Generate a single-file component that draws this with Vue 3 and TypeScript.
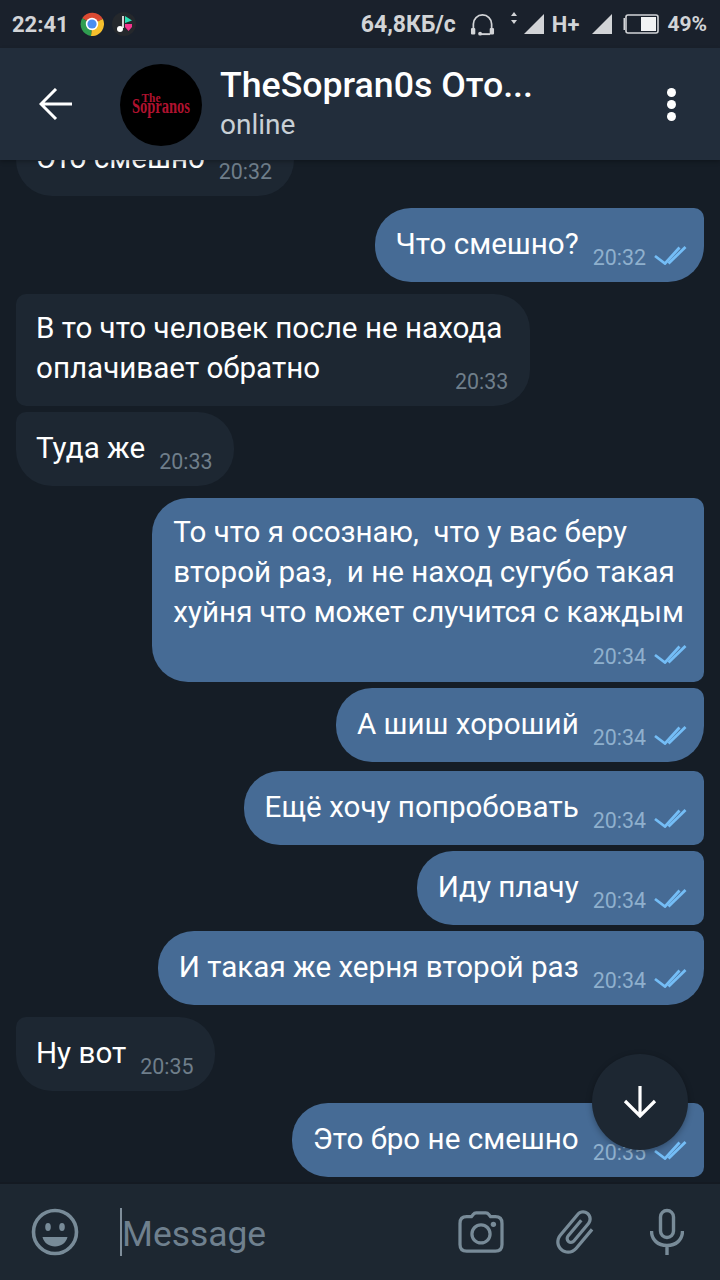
<template>
  <div class="phone">
    <div class="status-bar">
      <span class="clock">22:41</span>
      <svg class="status-app" width="24" height="24" viewBox="0 0 24 24">
        <path d="M12 12 L2.2 6.2 A12 12 0 0 1 22.9 7 Z" fill="#db4a32" />
        <path d="M12 12 L22.9 7 A12 12 0 0 1 11 24 Z" fill="#f6c02d" />
        <path d="M12 12 L11 24 A12 12 0 0 1 2.2 6.2 Z" fill="#2f9d50" />
        <circle cx="12" cy="12" r="6.2" fill="#fff" />
        <circle cx="12" cy="12" r="4.6" fill="#4a8df0" />
      </svg>
      <svg class="status-app" width="24" height="24" viewBox="0 0 24 24">
        <circle cx="12" cy="12" r="12" fill="#25282c" />
        <path d="M11 4 V16" stroke="#fff" stroke-width="1.6" />
        <circle cx="8" cy="17" r="3" fill="#fff" />
        <path d="M13 4 L20 8.5 L13 11 Z" fill="#2be0b4" />
        <path d="M13 12 H20 V15 L16.5 19 L13 15 Z" fill="#f5358f" />
      </svg>
      <span class="status-spacer"></span>
      <span class="speed">64,8КБ/с</span>
      <svg class="status-headset" width="25" height="24" viewBox="0 0 26 24" fill="none">
        <path d="M3.5 17 V11 a9.5 9.5 0 0 1 19 0 V17" stroke="#d2d4d7" stroke-width="1.8" />
        <rect x="1" y="15" width="4.5" height="7" rx="1.2" fill="#d2d4d7" />
        <rect x="20.5" y="15" width="4.5" height="7" rx="1.2" fill="#d2d4d7" />
        <path d="M10 21.5 H21" stroke="#d2d4d7" stroke-width="2" />
        <circle cx="10.5" cy="21" r="2" fill="#d2d4d7" />
      </svg>
      <svg class="status-arrows" width="6" height="12" viewBox="0 0 6 12">
        <path d="M3 0 L6 4 H0 Z M3 12 L6 8 H0 Z" fill="#d2d4d7" />
      </svg>
      <svg class="status-signal" width="20" height="20" viewBox="0 0 20 20">
        <path d="M20 0 V20 H0 Z" fill="#d2d4d7" />
      </svg>
      <span class="network">H+</span>
      <svg class="status-signal second" width="20" height="20" viewBox="0 0 20 20">
        <path d="M20 0 V20 H0 Z" fill="#d2d4d7" />
      </svg>
      <svg class="status-battery" width="37" height="20" viewBox="0 0 37 20" fill="none">
        <path d="M3 4 H1.5 V16 H3 Z" fill="#d2d4d7" />
        <rect x="4" y="1" width="32" height="18" rx="2" stroke="#d2d4d7" stroke-width="1.6" />
        <rect x="19" y="3" width="15" height="14" fill="#f2f3f4" />
      </svg>
      <span class="percent">49%</span>
    </div>

    <header class="chat-header">
      <svg class="back" width="34" height="32" viewBox="0 0 34 32" fill="none">
        <path d="M33 16 H3 M17 1 L2 16 L17 31" stroke="#fff" stroke-width="3" />
      </svg>
      <div class="avatar">
        <svg width="82" height="82" viewBox="0 0 82 82">
          <text x="31" y="38" class="logo-the" textLength="19" lengthAdjust="spacingAndGlyphs">The</text>
          <text x="41" y="49" class="logo-name" textLength="58" lengthAdjust="spacingAndGlyphs">Sopranos</text>
        </svg>
      </div>
      <div class="peer">
        <div class="peer-name">TheSopran0s Ото...</div>
        <div class="peer-status">online</div>
      </div>
      <div class="menu-dots">
        <i></i><i></i><i></i>
      </div>
    </header>

    <main class="chat">
      <div
        v-for="msg in messages"
        :key="msg.id"
        class="bubble"
        :class="[msg.out ? 'out' : 'in', msg.corners, msg.gap, { stack: msg.stack, overlap: msg.overlap }]"
      >
        <div class="text">{{ msg.text }}</div>
        <div class="meta">
          <span class="time">{{ msg.time }}</span>
          <svg v-if="msg.out" class="checks" width="33" height="19" viewBox="0 0 33 19" fill="none">
            <path d="M1 10 L11 17.5 L25.5 1.5" stroke="#74bdf6" stroke-width="2.8" />
            <path d="M14.5 17.5 L31.5 1" stroke="#74bdf6" stroke-width="2.8" />
          </svg>
        </div>
      </div>
      <button class="scroll-down">
        <svg width="34" height="34" viewBox="0 0 34 34" fill="none">
          <path d="M17 1 V30 M2 16 L17 31 L32 16" stroke="#fff" stroke-width="3.2" />
        </svg>
      </button>
    </main>

    <footer class="composer">
      <svg class="emoji" width="48" height="48" viewBox="0 0 48 48" fill="none">
        <circle cx="24" cy="24" r="21.5" stroke="#788b98" stroke-width="3.6" />
        <ellipse cx="17" cy="19" rx="2.8" ry="4" fill="#788b98" />
        <ellipse cx="31" cy="19" rx="2.8" ry="4" fill="#788b98" />
        <path d="M11.5 29 H36.5 C35 35 30 38.5 24 38.5 C18 38.5 13 35 11.5 29 Z" fill="#788b98" />
      </svg>
      <div class="input">
        <span class="caret"></span>
        <span class="placeholder">Message</span>
      </div>
      <svg class="camera" width="46" height="42" viewBox="0 0 48 44" fill="none">
        <path d="M9 6 H14 L16 3.5 Q17 2 19 2 H29 Q31 2 32 3.5 L34 6 H39 Q46 6 46 13 V35 Q46 42 39 42 H9 Q2 42 2 35 V13 Q2 6 9 6 Z" stroke="#788b98" stroke-width="3.4" />
        <circle cx="24" cy="24" r="9.5" stroke="#788b98" stroke-width="3.4" />
        <circle cx="37" cy="14" r="2.8" fill="#788b98" />
      </svg>
      <svg class="clip" width="52" height="52" viewBox="0 0 24 24">
        <path
          transform="rotate(40 12 12)"
          d="M16.5 6v11.5c0 2.21-1.79 4-4 4s-4-1.79-4-4V5c0-1.38 1.12-2.5 2.5-2.5s2.5 1.12 2.5 2.5v10.5c0 .55-.45 1-1 1s-1-.45-1-1V6H10v9.5c0 1.38 1.12 2.5 2.5 2.5s2.5-1.12 2.5-2.5V5c0-2.21-1.79-4-4-4S7 2.79 7 5v12.5c0 3.04 2.46 5.5 5.5 5.5s5.5-2.46 5.5-5.5V6h-1.5z"
          fill="#788b98"
        />
      </svg>
      <svg class="mic" width="34" height="48" viewBox="0 0 34 48" fill="none">
        <rect x="10.5" y="2.5" width="13" height="27" rx="6.5" stroke="#788b98" stroke-width="3.4" />
        <path d="M1.5 23 C1.5 32 8 37.5 17 37.5 C26 37.5 32.5 32 32.5 23 M17 37 V47" stroke="#788b98" stroke-width="3.4" />
      </svg>
    </footer>
  </div>
</template>

<script setup lang="ts">
interface Message {
  id: number;
  text: string;
  time: string;
  out: boolean;
  corners: string;
  gap?: string;
  stack?: boolean;
  overlap?: boolean;
}

const messages: Message[] = [
  { id: 1, text: 'Это смешно', time: '20:32', out: false, corners: 'c-single' },
  { id: 2, text: 'Что смешно?', time: '20:32', out: true, corners: 'c-first' },
  { id: 3, text: 'В то что человек после не находа\nоплачивает обратно', time: '20:33', out: false, corners: 'c-mid-in', stack: true, overlap: true },
  { id: 4, text: 'Туда же', time: '20:33', out: false, corners: 'c-last-in', gap: 'tight' },
  {
    id: 5,
    text: 'То что я осознаю,  что у вас беру\nвторой раз,  и не наход сугубо такая\nхуйня что может случится с каждым',
    time: '20:34',
    out: true,
    corners: 'c-mid-out',
    stack: true,
  },
  { id: 6, text: 'А шиш хороший', time: '20:34', out: true, corners: 'c-last-out', gap: 'tight' },
  { id: 7, text: 'Ещё хочу попробовать', time: '20:34', out: true, corners: 'c-mid-out', gap: 'mid' },
  { id: 8, text: 'Иду плачу', time: '20:34', out: true, corners: 'c-mid-out', gap: 'tight' },
  { id: 9, text: 'И такая же херня второй раз', time: '20:34', out: true, corners: 'c-last-out', gap: 'tight' },
  { id: 10, text: 'Ну вот', time: '20:35', out: false, corners: 'c-last-in' },
  { id: 11, text: 'Это бро не смешно', time: '20:35', out: true, corners: 'c-mid-out' },
];
</script>

<style>
html,
body {
  margin: 0;
  background: #151d26;
}
</style>

<style scoped>
.phone {
  width: 720px;
  height: 1280px;
  display: flex;
  flex-direction: column;
  overflow: hidden;
  background: #151d26;
  font-family: Roboto, "Noto Sans", sans-serif;
  color: #fff;
}

.status-bar {
  height: 48px;
  flex: none;
  display: flex;
  align-items: center;
  padding: 0 13px 0 12px;
  box-sizing: border-box;
  background: #1a212c;
  color: #d2d4d7;
  font-size: 21px;
  font-weight: 700;
}

.clock {
  margin-right: 11px;
  font-size: 22px;
}

.status-app {
  margin-right: 8px;
}

.status-spacer {
  flex: 1;
}

.speed {
  font-size: 23px;
}

.status-headset {
  margin-left: 14px;
  margin-top: 2px;
}

.status-arrows {
  margin-left: 16px;
  margin-top: -12px;
}

.status-signal {
  margin-left: 7px;
}

.status-signal.second {
  margin-left: 13px;
}

.network {
  margin-left: 8px;
  font-size: 22px;
}

.status-battery {
  margin-left: 10px;
}

.percent {
  margin-left: 8px;
}

.chat-header {
  height: 112px;
  flex: none;
  display: flex;
  align-items: center;
  background: #222d3b;
  box-shadow: 0 2px 4px rgba(0, 0, 0, 0.25);
  position: relative;
  z-index: 2;
}

.back {
  margin-left: 39px;
  flex: none;
}

.avatar {
  width: 82px;
  height: 82px;
  margin-left: 47px;
  margin-top: 1px;
  border-radius: 50%;
  background: #000;
  flex: none;
}

.logo-the,
.logo-name {
  font-family: "Liberation Serif", serif;
  font-weight: 700;
  fill: #b0122f;
  text-anchor: middle;
}

.logo-the {
  font-size: 13px;
}

.logo-name {
  font-size: 20px;
}

.peer {
  margin-left: 18px;
  flex: 1;
  min-width: 0;
}

.peer-name {
  font-size: 35.7px;
  font-weight: 500;
  line-height: 40px;
}

.peer-status {
  margin-top: 1px;
  font-size: 28px;
  line-height: 38px;
  color: #c9d0d6;
}

.menu-dots {
  display: flex;
  flex-direction: column;
  gap: 3px;
  margin-right: 44px;
}

.menu-dots i {
  width: 9px;
  height: 9px;
  border-radius: 50%;
  background: #fff;
}

.chat {
  flex: 1;
  min-height: 0;
  position: relative;
  overflow: hidden;
  display: flex;
  flex-direction: column;
  justify-content: flex-end;
  align-items: flex-start;
  padding: 0 16px 5px;
}

.bubble {
  flex: none;
  display: flex;
  box-sizing: border-box;
  padding: 16px 17px 18px 21px;
  margin-top: 12px;
  font-size: 29.6px;
  line-height: 40px;
}

.bubble.mid {
  margin-top: 9px;
}

.bubble.tight {
  margin-top: 6px;
}

.bubble.in {
  background: #1d2732;
  padding-left: 20px;
  padding-right: 22px;
}

.bubble.out {
  background: #466b95;
  align-self: flex-end;
}

.text {
  white-space: pre-wrap;
}

.meta {
  display: flex;
  align-items: center;
  align-self: flex-end;
  height: 22px;
  margin-left: 14px;
  margin-bottom: -5px;
  font-size: 21.4px;
  line-height: 22px;
}

.in .time {
  color: #6f7e8a;
}

.out .time {
  color: #8fb0cd;
}

.checks {
  margin-left: 8px;
  margin-top: -6px;
}

.bubble.stack {
  flex-direction: column;
  padding-top: 14px;
  padding-bottom: 14px;
}

.bubble.out.stack {
  padding-right: 20px;
}

.stack .meta {
  margin: 14px 0 0;
}

.out.stack .meta {
  margin-right: -3px;
}

.bubble.overlap .text {
  margin-right: 6px;
}

.bubble.overlap .meta {
  margin-top: -17px;
}

.bubble.overlap {
  padding-bottom: 13px;
}

.c-single {
  border-radius: 36px;
}

.c-first {
  border-radius: 36px 10px 36px 36px;
}

.c-mid-in {
  border-radius: 10px 36px 36px 10px;
}

.c-last-in {
  border-radius: 10px 36px 36px 36px;
}

.c-mid-out {
  border-radius: 36px 10px 10px 36px;
}

.c-last-out {
  border-radius: 36px 10px 36px 36px;
}

.scroll-down {
  position: absolute;
  right: 32px;
  bottom: 32px;
  width: 96px;
  height: 96px;
  padding: 0;
  border: none;
  border-radius: 50%;
  background: #1d2732;
  box-shadow: 0 2px 6px rgba(0, 0, 0, 0.3);
  display: flex;
  align-items: center;
  justify-content: center;
}

.composer {
  height: 98px;
  flex: none;
  display: flex;
  align-items: center;
  box-sizing: border-box;
  border-top: 2px solid #141a22;
  background: #1d2731;
}

.emoji {
  margin-left: 31px;
  flex: none;
}

.input {
  flex: 1;
  margin-left: 41px;
  display: flex;
  align-items: center;
}

.caret {
  width: 2px;
  height: 48px;
  background: #7f8e9a;
}

.placeholder {
  font-size: 35.4px;
  color: #6f808e;
  margin-top: 4px;
}

.camera {
  margin-right: 45px;
}

.clip {
  margin-right: 49px;
}

.mic {
  margin-right: 36px;
}
</style>
